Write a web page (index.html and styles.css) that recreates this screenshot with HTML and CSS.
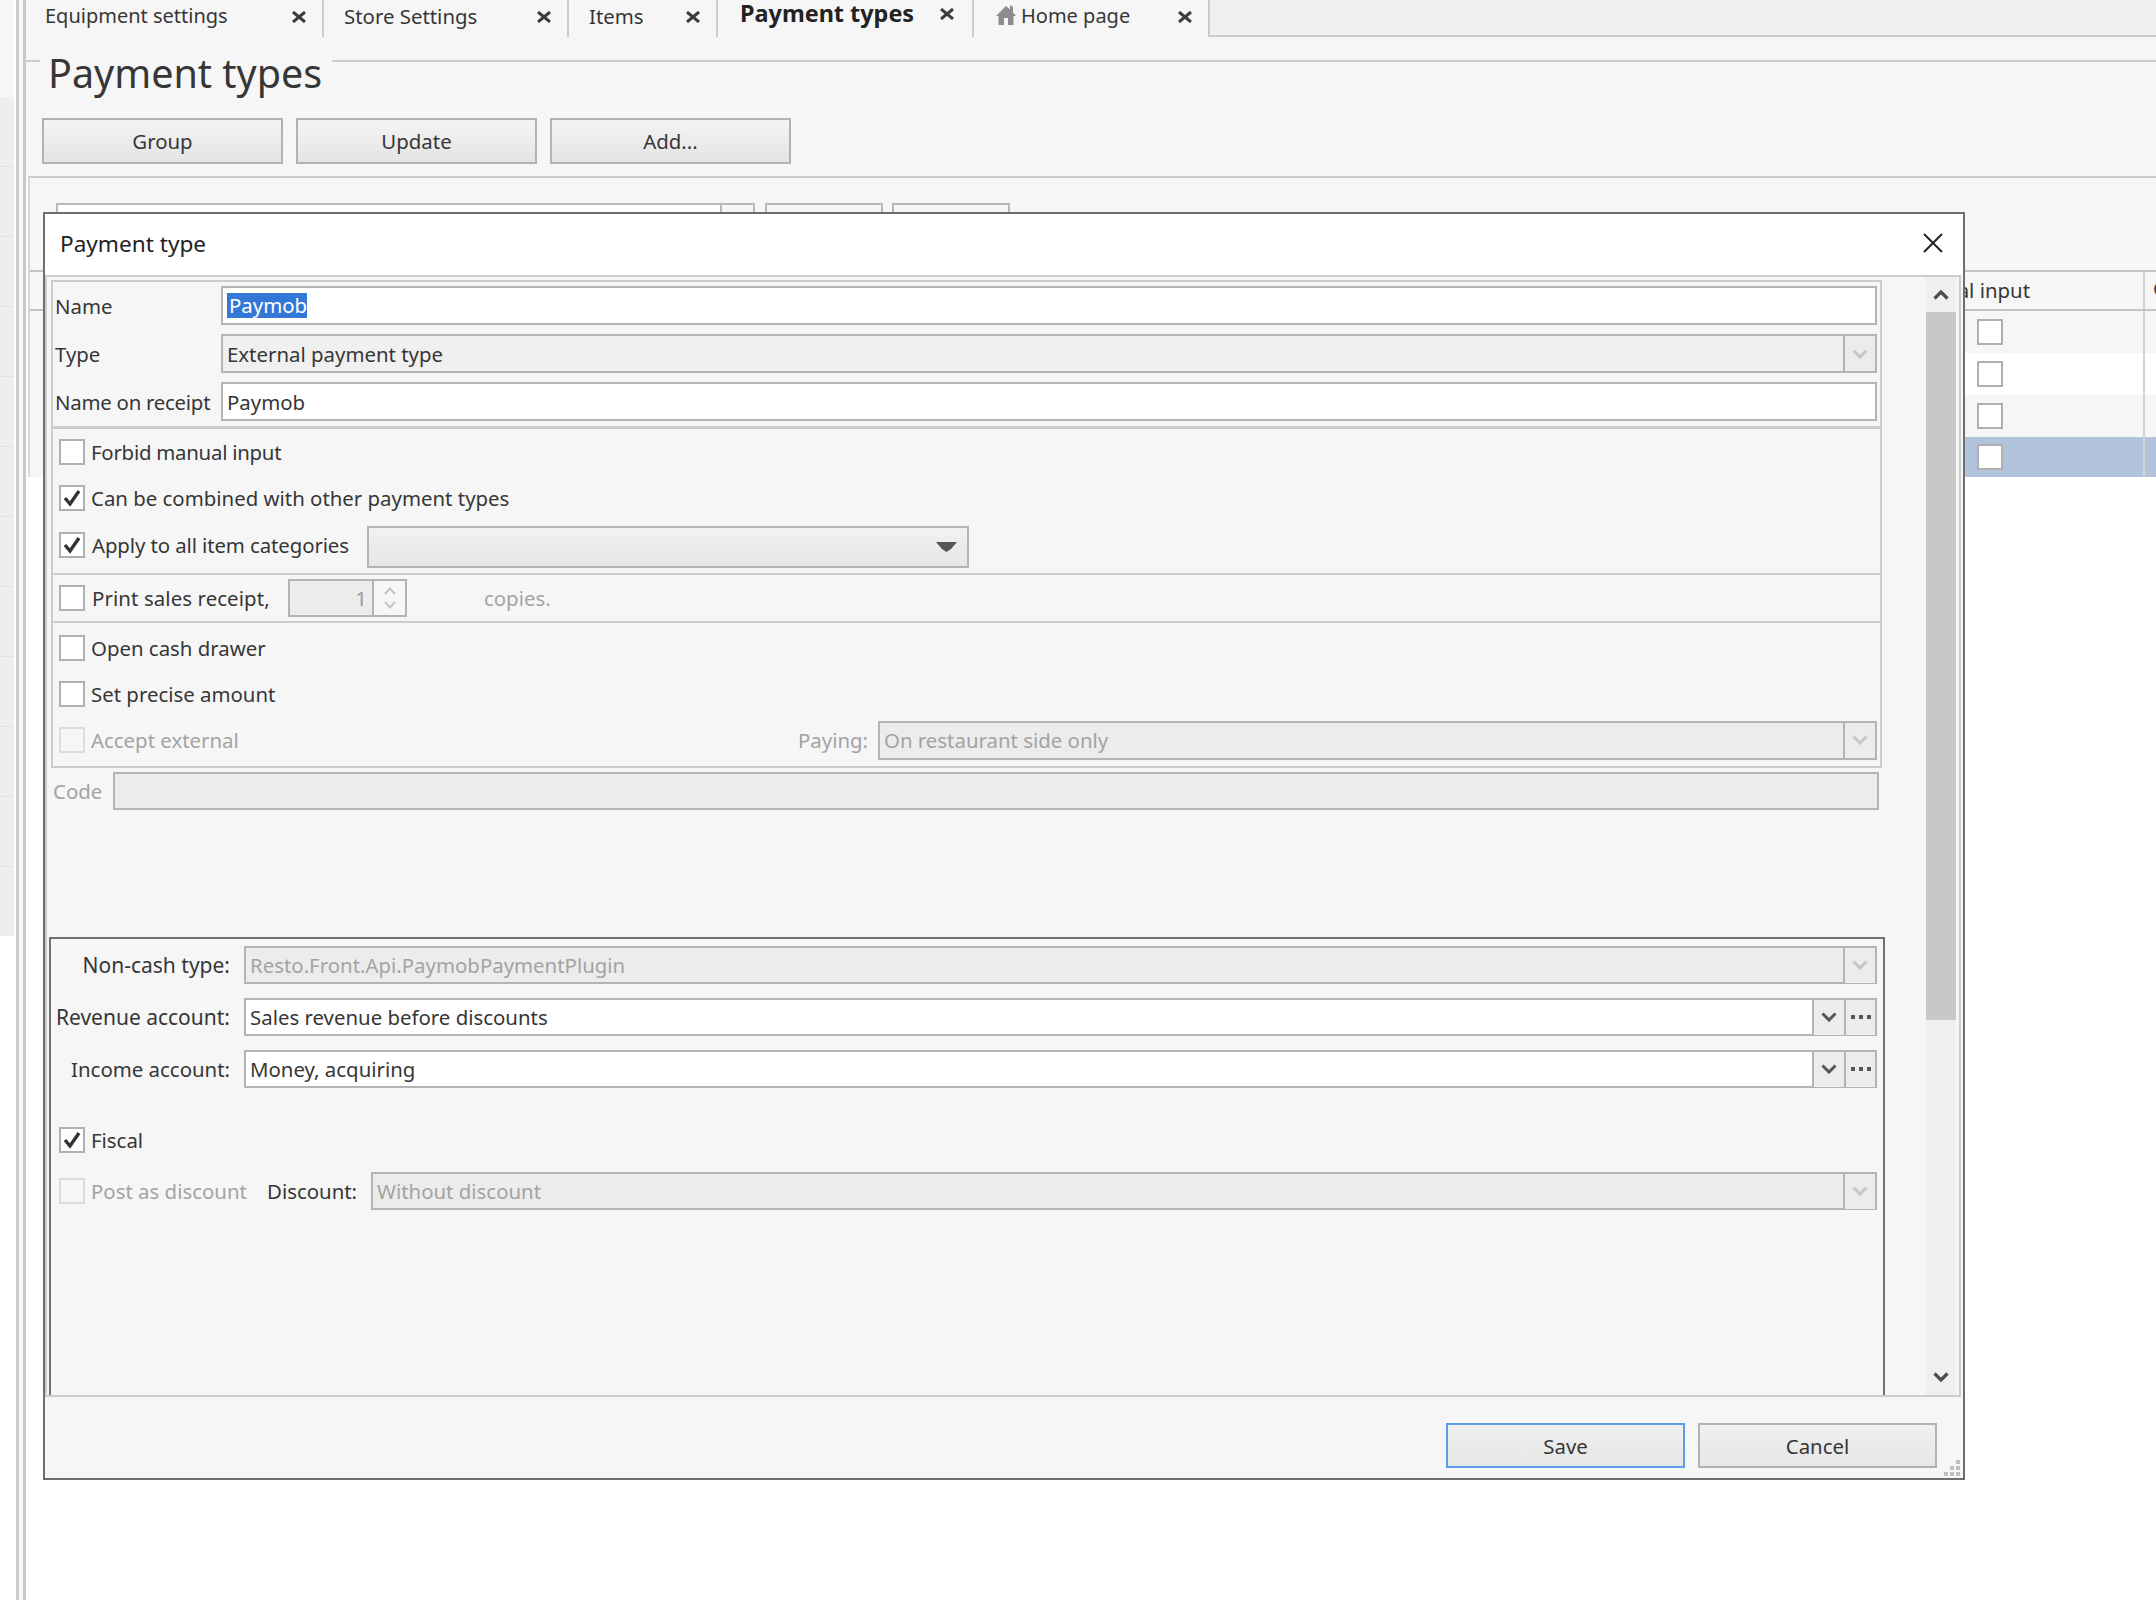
FILE: index.html
```html
<!DOCTYPE html>
<html>

	<head>
		<meta charset="UTF-8">
		<title>Payment types</title>
		<link rel="stylesheet" href="styles.css">
	</head>

	<body>
		<div class="app">
			<div class="strip">
				<div class="strip-top"></div>
				<div class="strip-row"></div><div class="strip-row"></div><div class="strip-row"></div><div class="strip-row"></div>
				<div class="strip-row"></div><div class="strip-row"></div><div class="strip-row"></div><div class="strip-row"></div>
				<div class="strip-row"></div><div class="strip-row"></div><div class="strip-row"></div><div class="strip-row"></div>
			</div>
			<div class="rail"></div>
			<div class="main">
				<div class="tabs">
					<div class="tab tab1"><span>Equipment settings</span><svg class="tab-x" viewBox="0 0 14 12"><path d="M1 1L13 11M13 1L1 11"/></svg></div>
					<div class="tab tab2"><span>Store Settings</span><svg class="tab-x" viewBox="0 0 14 12"><path d="M1 1L13 11M13 1L1 11"/></svg></div>
					<div class="tab tab3"><span>Items</span><svg class="tab-x" viewBox="0 0 14 12"><path d="M1 1L13 11M13 1L1 11"/></svg></div>
					<div class="tab tab4 active"><span>Payment types</span><svg class="tab-x" viewBox="0 0 14 12"><path d="M1 1L13 11M13 1L1 11"/></svg></div>
					<div class="tab tab5">
						<svg class="home" viewBox="0 0 20 20"><path d="M10 1L14 4.5V0L17 2V7.5L20 11H17.5V20H12V13H8V20H2.5V11H0Z"/></svg>
						<span>Home page</span><svg class="tab-x" viewBox="0 0 14 12"><path d="M1 1L13 11M13 1L1 11"/></svg>
					</div>
				</div>
				<div class="head">
					<div class="head-stub"></div>
					<h1 class="page-title">Payment types</h1>
					<div class="head-line"></div>
				</div>
				<div class="actions">
					<button class="btn">Group</button>
					<button class="btn">Update</button>
					<button class="btn">Add...</button>
				</div>
				<div class="content">
					<div class="toolbar">
						<div class="tool-input"></div>
						<div class="tool-drop"></div>
						<div class="tool-btn first"></div>
						<div class="tool-btn"></div>
					</div>
					<div class="grid">
						<div class="grid-head">
							<div class="col-main head-text">Forbid manual input</div>
							<div class="col-next head-text">Can be combined</div>
						</div>
						<div class="grid-row"><div class="col-main"><span class="cb"></span></div></div>
						<div class="grid-row white"><div class="col-main"><span class="cb"></span></div></div>
						<div class="grid-row"><div class="col-main"><span class="cb"></span></div></div>
						<div class="grid-row picked"><div class="col-main"><span class="cb"></span></div></div>
					</div>
				</div>
			</div>
		</div>

		<div class="dialog">
			<div class="dlg-head">
				<span class="dlg-title">Payment type</span>
				<svg class="dlg-close" viewBox="0 0 20 20"><path d="M1 1L19 19M19 1L1 19"/></svg>
			</div>
			<div class="dlg-body">
				<div class="form">
					<div class="group1">
						<div class="field">
							<label class="field-label">Name</label>
							<div class="input"><span class="selected">Paymob</span></div>
						</div>
						<div class="field">
							<label class="field-label">Type</label>
							<div class="input soft light">External payment type<span class="drop off"><svg viewBox="0 0 16 10"><path d="M1.5 1.5L8 8L14.5 1.5"/></svg></span></div>
						</div>
						<div class="field">
							<label class="field-label tight">Name on receipt</label>
							<div class="input">Paymob</div>
						</div>
					</div>
					<div class="group2">
						<div class="check-row"><span class="cb"></span><span class="cb-label tight">Forbid manual input</span></div>
						<div class="check-row"><span class="cb"><svg viewBox="0 0 22 22"><path d="M4 11L9 17L18 4"/></svg></span><span class="cb-label">Can be combined with other payment types</span></div>
						<div class="check-row apply-row">
							<span class="cb"><svg viewBox="0 0 22 22"><path d="M4 11L9 17L18 4"/></svg></span><span class="cb-label apply-label">Apply to all item categories</span>
							<div class="apply-select"><svg viewBox="0 0 21 10"><path d="M0 0H21L15 7L10.5 10L6 7Z"/></svg></div>
						</div>
						<div class="print-box">
							<span class="cb"></span><span class="cb-label print-label">Print sales receipt,</span>
							<div class="spin">
								<span class="spin-val">1</span>
								<span class="spin-btns">
									<svg viewBox="0 0 12 8"><path d="M1 7L6 1.5L11 7"/></svg>
									<svg viewBox="0 0 12 8"><path d="M1 1L6 6.5L11 1"/></svg>
								</span>
							</div>
							<span class="copies">copies.</span>
						</div>
						<div class="check-row"><span class="cb"></span><span class="cb-label">Open cash drawer</span></div>
						<div class="check-row"><span class="cb"></span><span class="cb-label">Set precise amount</span></div>
						<div class="check-row accept-row">
							<span class="cb off"></span><span class="cb-label grey">Accept external</span>
							<span class="paying grey">Paying:</span>
							<div class="input soft grey paying-input">On restaurant side only<span class="drop off"><svg viewBox="0 0 16 10"><path d="M1.5 1.5L8 8L14.5 1.5"/></svg></span></div>
						</div>
					</div>
					<div class="code-row">
						<span class="code-label grey">Code</span>
						<div class="input soft"></div>
					</div>
					<div class="group3">
						<div class="acc-row">
							<label class="acc-label">Non-cash type:</label>
							<div class="input soft grey">Resto.Front.Api.PaymobPaymentPlugin<span class="drop off"><svg viewBox="0 0 16 10"><path d="M1.5 1.5L8 8L14.5 1.5"/></svg></span></div>
						</div>
						<div class="acc-row">
							<label class="acc-label">Revenue account:</label>
							<div class="input">Sales revenue before discounts<span class="drop"><svg viewBox="0 0 16 10"><path d="M1.5 1.5L8 8L14.5 1.5"/></svg></span><span class="dots"><i></i><i></i><i></i></span></div>
						</div>
						<div class="acc-row">
							<label class="acc-label income">Income account:</label>
							<div class="input">Money, acquiring<span class="drop"><svg viewBox="0 0 16 10"><path d="M1.5 1.5L8 8L14.5 1.5"/></svg></span><span class="dots"><i></i><i></i><i></i></span></div>
						</div>
						<div class="fiscal-row"><span class="cb"><svg viewBox="0 0 22 22"><path d="M4 11L9 17L18 4"/></svg></span><span class="cb-label">Fiscal</span></div>
						<div class="post-row">
							<span class="cb off"></span><span class="cb-label grey post-label">Post as discount</span>
							<span class="discount">Discount:</span>
							<div class="input soft grey">Without discount<span class="drop off"><svg viewBox="0 0 16 10"><path d="M1.5 1.5L8 8L14.5 1.5"/></svg></span></div>
						</div>
					</div>
				</div>
				<div class="scroll">
					<div class="scroll-up"><svg viewBox="0 0 16 10"><path d="M1.5 8.5L8 2L14.5 8.5"/></svg></div>
					<div class="scroll-thumb"></div>
					<div class="scroll-down"><svg viewBox="0 0 16 10"><path d="M1.5 1.5L8 8L14.5 1.5"/></svg></div>
				</div>
			</div>
			<div class="dlg-foot">
				<button class="btn foot-btn focus">Save</button>
				<button class="btn foot-btn">Cancel</button>
			</div>
			<svg class="grip" viewBox="0 0 16 16"><path d="M12 0h4v4h-4zM6 6h4v4H6zM12 6h4v4h-4zM0 12h4v4H0zM6 12h4v4H6zM12 12h4v4h-4z"/></svg>
		</div>
	</body>

</html>
```

FILE: styles.css
```css
* {
	margin: 0;
	padding: 0;
	box-sizing: border-box;
}

body {
	width: 2156px;
	height: 1600px;
	overflow: hidden;
	background: #fff;
	font-family: "Noto Sans", "Open Sans", sans-serif;
	font-size: 20.4px;
	color: #363636;
	position: relative;
}

.app {
	display: flex;
	height: 1600px;
}

.grey {
	color: #a3a3a3;
}

.tight {
	letter-spacing: -0.25px;
}

/* left strip */
.strip {
	width: 14px;
	flex: none;
}

.strip-top {
	height: 97px;
	background: #f6f6f6;
}

.strip-row {
	height: 70px;
	background: #eee;
	border-bottom: 1px solid #e2e2e2;
}

.strip-row:last-child {
	height: 69px;
	border-bottom: 0;
}

.rail {
	width: 10px;
	margin-left: 2px;
	flex: none;
	background: #f6f6f6;
	border-left: 3px solid #ccc;
	border-right: 3px solid #c8c8c8;
}

.main {
	flex: 1;
	min-width: 0;
	background: #fff;
}

/* tabs */
.tabs {
	display: flex;
	height: 37px;
	background: #f0f0f0;
	border-bottom: 2px solid #ccc;
}

.tab {
	display: flex;
	align-items: center;
	height: 37px;
	background: #f6f6f6;
	border-right: 2px solid #ccc;
	white-space: nowrap;
	flex: none;
}

.tab span {
	padding-bottom: 6px;
}

.tab1 { width: 298px; padding-left: 19px; font-size: 20px; }
.tab2 { width: 245px; padding-left: 20px; }
.tab3 { width: 149px; padding-left: 20px; }
.tab4 { width: 256px; padding-left: 22px; }
.tab5 { width: 236px; padding-left: 22px; font-size: 20px; }

.tab-x {
	margin-left: auto;
	margin-right: 16px;
	margin-bottom: 4px;
	width: 14px;
	height: 12px;
	flex: none;
	fill: none;
	stroke: #3c3c3c;
	stroke-width: 3;
}

.tab.active {
	font-size: 23.4px;
	font-weight: 700;
	color: #222;
	align-items: flex-start;
	position: relative;
	z-index: 1;
}

.tab.active span {
	padding-bottom: 0;
	line-height: 26px;
}

.tab.active .tab-x {
	margin-top: 8px;
	margin-right: 18px;
	margin-bottom: 0;
}

.home {
	width: 20px;
	height: 20px;
	fill: #8c8c8c;
	margin-right: 5px;
	margin-bottom: 7px;
	flex: none;
}

/* page head */
.head {
	display: flex;
	align-items: flex-start;
	height: 81px;
	padding-top: 23px;
	background: #f6f6f6;
}

.head-stub {
	width: 14px;
	height: 2px;
	background: #ccc;
}

.page-title {
	width: 292px;
	padding-left: 8px;
	margin-top: -12px;
	font-size: 39.5px;
	font-weight: 400;
	line-height: 50px;
	white-space: nowrap;
}

.head-line {
	flex: 1;
	height: 2px;
	background: #ccc;
}

.actions {
	display: flex;
	gap: 13px;
	height: 58px;
	padding-left: 16px;
	background: #f6f6f6;
}

.btn {
	width: 241px;
	height: 46px;
	font: inherit;
	color: inherit;
	background: linear-gradient(#f4f4f4, #e4e4e4);
	border: 2px solid #b2b2b2;
}

/* page behind the dialog */
.content {
	margin-left: 2px;
	border-top: 2px solid #ccc;
	border-left: 2px solid #d8d8d8;
}

.toolbar {
	display: flex;
	height: 92px;
	padding: 25px 0 0 26px;
	background: #f6f6f6;
}

.tool-input {
	width: 666px;
	height: 34px;
	background: #fff;
	border: 2px solid #b8b8b8;
}

.tool-drop {
	width: 33px;
	height: 34px;
	border: 2px solid #b8b8b8;
	border-left: 0;
}

.tool-btn {
	width: 118px;
	height: 34px;
	margin-left: 9px;
	border: 2px solid #b8b8b8;
}

.tool-btn.first {
	margin-left: 10px;
}

.grid-head {
	display: flex;
	height: 41px;
	background: #f6f6f6;
	border-top: 2px solid #c4c4c4;
	border-bottom: 2px solid #c4c4c4;
}

.head-text {
	line-height: 33px;
	white-space: nowrap;
	overflow: hidden;
}

.col-main {
	flex: none;
	width: 2115px;
	display: flex;
	align-items: center;
	justify-content: flex-end;
	padding-right: 113px;
	border-right: 2px solid #d4d4d4;
}

.col-next {
	flex: 1;
	padding-left: 8px;
	min-width: 0;
}

.grid-row {
	height: 42px;
	background: #f6f6f6;
	display: flex;
}

.grid-row .col-main {
	padding-right: 140px;
}

.grid-row.white {
	background: linear-gradient(90deg, #f6f6f6 100px, #fff 100px);
}

.grid-row.picked {
	height: 40px;
	background: linear-gradient(90deg, #f6f6f6 100px, #b2c3dc 100px);
}

/* checkbox */
.cb {
	display: inline-block;
	width: 26px;
	height: 26px;
	flex: none;
	background: #fff;
	border: 2px solid #b0b0b0;
}

.cb svg {
	display: block;
	width: 22px;
	height: 22px;
	fill: none;
	stroke: #333;
	stroke-width: 3.4;
}

.cb.off {
	background: #f6f6f6;
	border-color: #dcdcdc;
}

.cb-label {
	margin-left: 6px;
	white-space: nowrap;
}

/* dialog */
.dialog {
	position: absolute;
	left: 43px;
	top: 212px;
	width: 1922px;
	height: 1268px;
	display: flex;
	flex-direction: column;
	background: #f6f6f6;
	border: 2px solid #6e6e6e;
}

.dlg-head {
	height: 61px;
	flex: none;
	display: flex;
	align-items: center;
	justify-content: space-between;
	padding: 0 20px 3px 15px;
	background: #fff;
}

.dlg-title {
	font-size: 22.6px;
	color: #222;
}

.dlg-close {
	width: 20px;
	height: 20px;
	fill: none;
	stroke: #222;
	stroke-width: 2;
}

.dlg-body {
	height: 1122px;
	flex: none;
	display: flex;
	margin-right: 2px;
	border: 2px solid #ccc;
}

.form {
	width: 1835px;
	flex: none;
	display: flex;
	flex-direction: column;
	padding: 3px 0 0 4px;
}

.group1 {
	padding: 4px 3px 5px 2px;
	border: 2px solid #ccc;
	border-bottom: 0;
	display: flex;
	flex-direction: column;
	gap: 9px;
}

.field {
	display: flex;
	align-items: center;
}

.field-label {
	width: 166px;
	flex: none;
	white-space: nowrap;
}

.input {
	flex: 1;
	min-width: 0;
	height: 39px;
	display: flex;
	align-items: center;
	padding-left: 4px;
	background: #fff;
	border: 2px solid #b4b4b4;
	white-space: nowrap;
}

.input.soft {
	background: #ececec;
}

.input.light {
	background: #f0f0f0;
}

.selected {
	background: #3378d6;
	color: #fff;
	line-height: 25px;
	padding-left: 2px;
}

.drop {
	width: 32px;
	height: 35px;
	flex: none;
	margin-left: auto;
	display: flex;
	align-items: center;
	justify-content: center;
	background: #ececec;
	border-left: 2px solid #b4b4b4;
}

.drop svg {
	width: 16px;
	height: 10px;
	fill: none;
	stroke: #555;
	stroke-width: 3;
}

.drop.off svg {
	stroke: #c6c6c6;
}

.dots {
	width: 31px;
	height: 35px;
	flex: none;
	display: flex;
	align-items: center;
	justify-content: center;
	gap: 4px;
	background: #ececec;
	border-left: 2px solid #b4b4b4;
}

.dots i {
	width: 4px;
	height: 4px;
	background: #555;
}

.group2 {
	border: 2px solid #ccc;
	border-top-width: 3px;
	height: 342px;
}

.check-row {
	height: 46px;
	display: flex;
	align-items: center;
	padding-left: 6px;
}

.apply-row {
	height: 52px;
}

.apply-row .cb {
	margin-top: -5px;
}

.apply-label {
	width: 275px;
	margin-top: -5px;
	margin-left: 7px;
	letter-spacing: -0.1px;
}

.apply-select {
	width: 602px;
	height: 42px;
	display: flex;
	align-items: center;
	justify-content: flex-end;
	padding-right: 10px;
	background: linear-gradient(#f2f2f2, #e6e6e6);
	border: 2px solid #b4b4b4;
}

.apply-select svg {
	width: 21px;
	height: 10px;
	fill: #555;
}

.print-box {
	height: 50px;
	display: flex;
	align-items: center;
	padding-left: 6px;
	margin-bottom: 2px;
	border-top: 2px solid #ccc;
	border-bottom: 2px solid #ccc;
}

.print-label {
	width: 196px;
	margin-left: 7px;
	letter-spacing: 0.1px;
}

.spin {
	width: 119px;
	height: 38px;
	flex: none;
	display: flex;
	border: 2px solid #b4b4b4;
	background: #ececec;
}

.spin-val {
	flex: 1;
	text-align: right;
	padding-right: 5px;
	line-height: 34px;
	color: #999;
}

.spin-btns {
	width: 33px;
	flex: none;
	display: flex;
	flex-direction: column;
	align-items: center;
	justify-content: center;
	gap: 6px;
	background: #f6f6f6;
	border-left: 2px solid #b4b4b4;
}

.spin-btns svg {
	width: 12px;
	height: 8px;
	fill: none;
	stroke: #c4c4c4;
	stroke-width: 2;
}

.copies {
	margin-left: 77px;
	color: #a3a3a3;
}

.accept-row {
	height: 49px;
	padding-bottom: 3px;
}

.paying {
	margin-left: auto;
	margin-right: 10px;
}

.paying-input {
	flex: none;
	width: 999px;
	margin-right: 3px;
}

.code-row {
	display: flex;
	align-items: center;
	margin-top: 4px;
	padding-right: 3px;
}

.code-label {
	width: 62px;
	flex: none;
	padding-left: 2px;
}

.code-row .input {
	height: 38px;
}

.group3 {
	flex: 1;
	margin: 127px -3px 0 -2px;
	padding: 7px 6px 0 2px;
	border: 2px solid #707070;
	border-bottom: 0;
}

.acc-row {
	display: flex;
	align-items: center;
	gap: 14px;
	height: 38px;
	margin-bottom: 14px;
}

.acc-label {
	width: 177px;
	flex: none;
	font-size: 21px;
	text-align: right;
	white-space: nowrap;
}

.acc-label.income {
	font-size: 20.4px;
}

.acc-row .input {
	height: 38px;
}

.fiscal-row {
	display: flex;
	align-items: center;
	height: 38px;
	margin-top: 33px;
	padding-left: 6px;
}

.post-row {
	display: flex;
	align-items: center;
	height: 38px;
	margin-top: 13px;
	padding-left: 6px;
}

.post-row .input {
	height: 38px;
}

.post-label {
	width: 176px;
}

.discount {
	width: 104px;
	flex: none;
	white-space: nowrap;
}

/* scrollbar */
.scroll {
	width: 30px;
	flex: none;
	margin-left: auto;
	margin-right: 3px;
	display: flex;
	flex-direction: column;
	background: #efefef;
}

.scroll-up {
	height: 35px;
	flex: none;
	display: flex;
	align-items: center;
	justify-content: center;
}

.scroll svg {
	width: 16px;
	height: 10px;
	fill: none;
	stroke: #4c4c4c;
	stroke-width: 3.2;
}

.scroll-thumb {
	height: 708px;
	flex: none;
	background: #c8c8c8;
}

.scroll-down {
	flex: 1;
	display: flex;
	align-items: flex-end;
	justify-content: center;
	padding-bottom: 13px;
}

/* footer */
.dlg-foot {
	flex: 1;
	display: flex;
	justify-content: flex-end;
	gap: 13px;
	padding: 26px 26px 0 0;
}

.foot-btn {
	width: 239px;
	height: 45px;
	background: linear-gradient(#f0f0f0, #e6e6e6);
}

.foot-btn.focus {
	border-color: #5c9cec;
}

.grip {
	position: absolute;
	right: 3px;
	bottom: 2px;
	width: 16px;
	height: 16px;
	fill: #c0c0c0;
}
```
